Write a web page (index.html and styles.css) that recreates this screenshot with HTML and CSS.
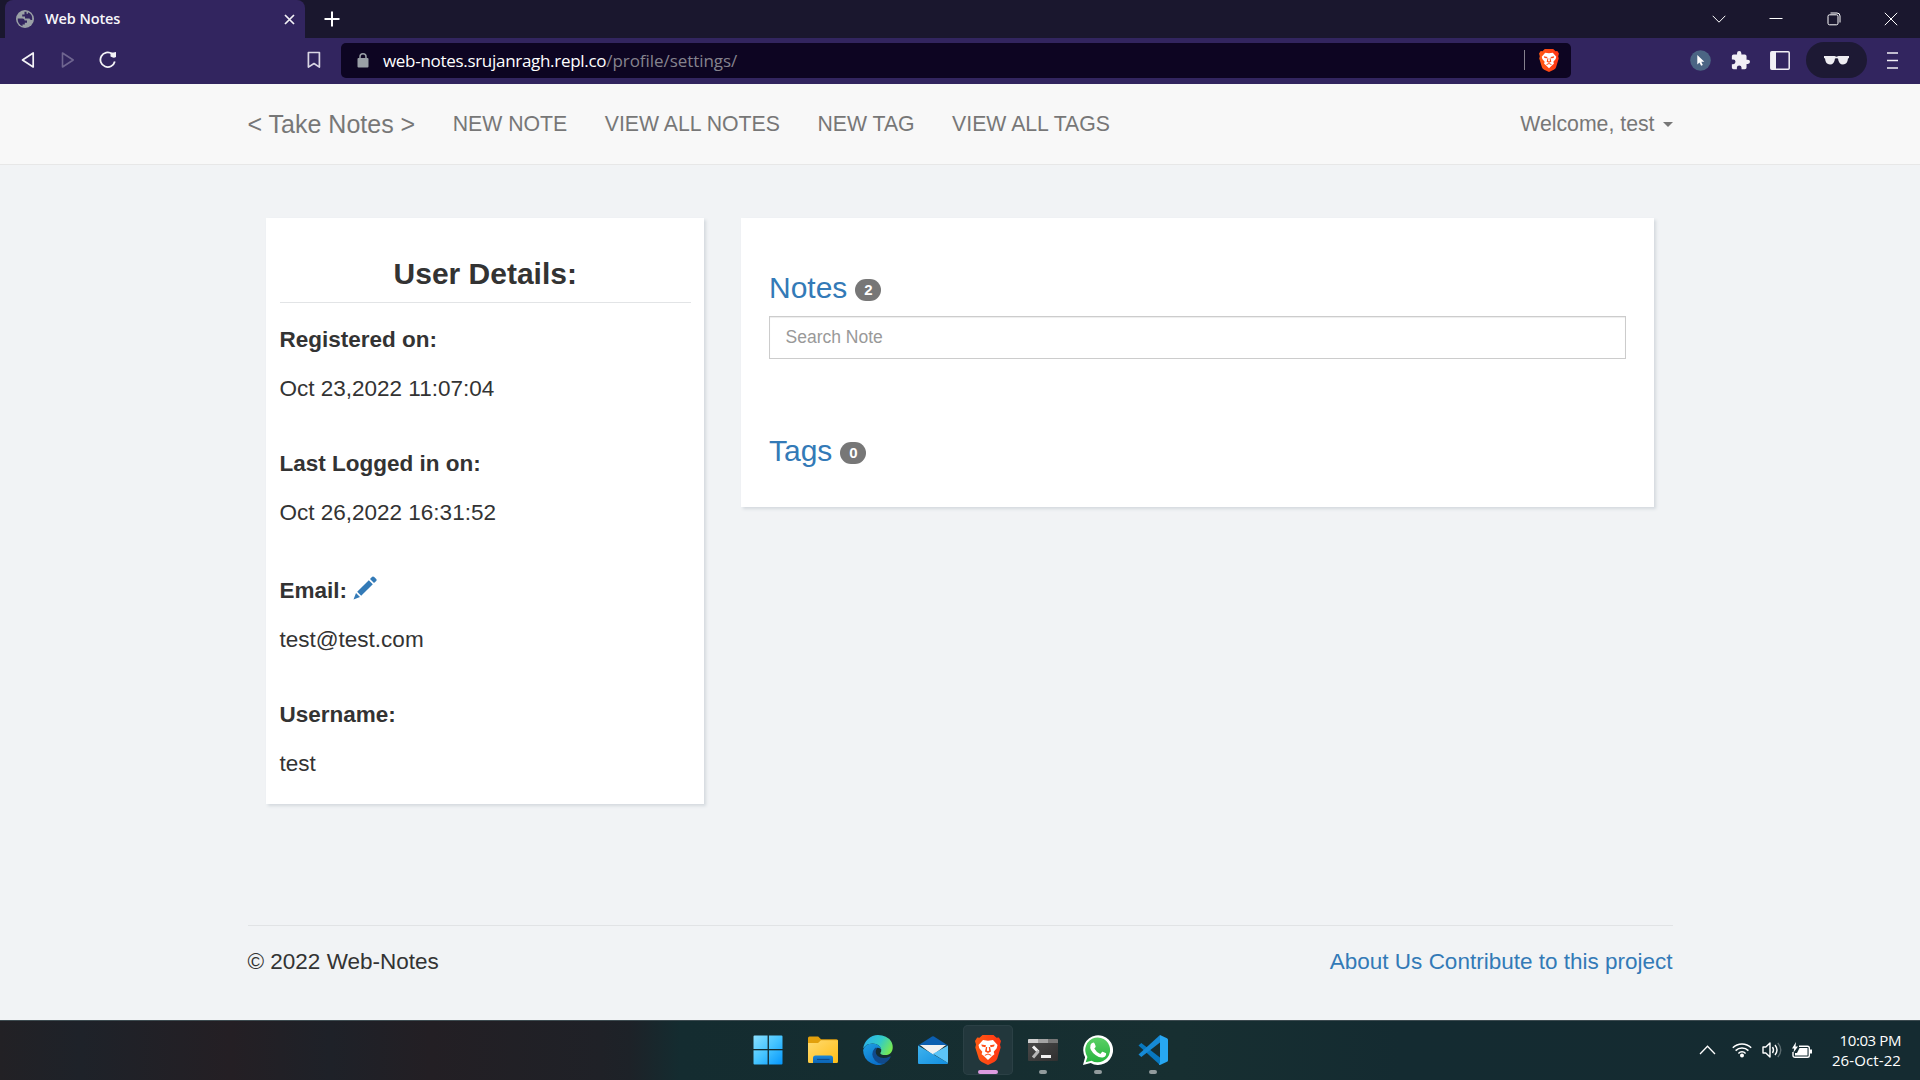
FILE: index.html
```html
<!DOCTYPE html>
<html lang="en">
<head>
<meta charset="utf-8">
<title>Web Notes</title>
<link rel="stylesheet" href="styles.css">
</head>
<body>
<div class="screen">
  <header class="tabstrip">
    <div class="tab">
      <svg class="tab-globe" width="18" height="18" viewBox="0 0 18 18"><circle cx="9" cy="9" r="9" fill="#9aa0a6"/><path d="M1.700 8.500h4.800q2 0 2.200 2H11v2.200H8.800v1.800H6.500v1.700A7.300 7.300 0 0 1 1.700 9zM8.500 1.800v2.700H6.200v2H9v2h4.500q1 2 2.700 1.500A7.300 7.300 0 0 0 12 2.300v1.500h-1.500v-2z" fill="#32255f"/></svg>
      <span class="tab-title">Web Notes</span>
      <svg class="tab-close" width="11" height="11" viewBox="0 0 11 11"><path d="M1 1l9 9M10 1l-9 9" stroke="#f3f2f6" stroke-width="1.700"/></svg>
    </div>
    <svg class="new-tab" width="16" height="16" viewBox="0 0 16 16"><path d="M8 .5v15M.5 8h15" stroke="#fff" stroke-width="2"/></svg>
    <div class="window-controls">
      <svg width="14" height="14" viewBox="0 0 14 14"><path d="M.7 3.800 7 10.200l6.300-6.400"/></svg>
      <svg width="14" height="14" viewBox="0 0 14 14"><path d="M.5 6.500h13"/></svg>
      <svg width="14" height="14" viewBox="0 0 14 14"><rect x="1" y="2.800" width="10" height="10" rx="1.500"/><path d="M3.500 1h6.500q3 0 3 3v6.500"/></svg>
      <svg width="14" height="14" viewBox="0 0 14 14"><path d="M.8.8l12.400 12.400M13.200.8.8 13.200"/></svg>
    </div>
  </header>
  <div class="toolbar">
    <svg class="nav-back" width="14" height="18" viewBox="0 0 14 18"><path d="M12.200 2v14L1.500 9z" fill="none" stroke="#f4f3f7" stroke-width="1.700" stroke-linejoin="round"/></svg>
    <svg class="nav-forward" width="14" height="18" viewBox="0 0 14 18"><path d="M1.500 2v14L12.200 9z" fill="none" stroke="#6f6590" stroke-width="1.600" stroke-linejoin="round"/></svg>
    <svg class="nav-reload" width="18" height="18" viewBox="0 0 18 18"><path d="M13 2.800A7.300 7.300 0 1 0 15.800 10.500" fill="none" stroke="#f4f3f7" stroke-width="1.800"/><path d="M11.500 1.800q3.500-.3 5.500-.8V6q-2.500 1.500-5.500-.5z" fill="#f4f3f7"/></svg>
    <svg class="bookmark" width="14" height="18" viewBox="0 0 14 18"><path d="M1.400 1.500h11v14.600L7 12.500l-5.600 3.600z" fill="none" stroke="#d9d6e4" stroke-width="1.700" stroke-linejoin="round"/></svg>
    <div class="address">
      <svg class="lock" width="12" height="15" viewBox="0 0 12 15"><rect x=".5" y="5" width="11" height="9.500" rx="1" fill="#9aa0a6"/><path d="M3 6V3.800a3 3 0 0 1 6 0V6" fill="none" stroke="#9aa0a6" stroke-width="1.500"/></svg>
      <span class="url">web-notes.srujanragh.repl.co<span class="url-path">/profile/settings/</span></span>
      <span class="address-line"></span>
      <svg class="shield" width="20" height="23" viewBox="0 0 26 30"><use href="#lion"/></svg>
    </div>
    <svg class="cursor-ext" width="21" height="21" viewBox="0 0 21 21"><circle cx="10.500" cy="10.500" r="10.300" fill="#4b6584"/><path d="M7.300 5v9.500l2.200-2 1.600 3.200 1.700-.8-1.500-3.200h3z" fill="#fff"/></svg>
    <svg class="puzzle" width="19" height="19" viewBox="1 1 22 22"><path fill="#f1eff5" d="M20.500 11H19V7a2 2 0 0 0-2-2h-4V3.500a2.500 2.500 0 0 0-5 0V5H4a2 2 0 0 0-2 2v3.800h1.500a2.700 2.700 0 0 1 0 5.400H2V20a2 2 0 0 0 2 2h3.800v-1.500a2.700 2.700 0 0 1 5.400 0V22H17a2 2 0 0 0 2-2v-4h1.500a2.500 2.500 0 0 0 0-5z"/></svg>
    <svg class="side-panel" width="20" height="19" viewBox="0 0 20 19"><rect x=".8" y=".8" width="18.400" height="17.400" rx="1" fill="none" stroke="#f1eff5" stroke-width="1.500"/><path d="M1 1h5v17H1z" fill="#f1eff5"/></svg>
    <div class="private">
      <svg width="25" height="9" viewBox="0 0 25 9"><path d="M0 0h10.500l2 .8 2-.8H25v2l-1 .6Q23.500 8.500 19 8.500q-4.300 0-5-6-1.500-.7-3 0-.7 6-5 6Q1.500 8.500 1 2.600L0 2z" fill="#eeedf2"/></svg>
    </div>
    <svg class="menu" width="11" height="17" viewBox="0 0 11 17"><path d="M0 1h11M0 8.500h11M0 16h11" stroke="#f1eff5" stroke-width="1.600"/></svg>
  </div>

  <div class="page">
    <nav class="navbar">
      <div class="container navbar-inner">
        <a class="brand">&lt; Take Notes &gt;</a>
        <a class="nav-link">NEW NOTE</a>
        <a class="nav-link">VIEW ALL NOTES</a>
        <a class="nav-link">NEW TAG</a>
        <a class="nav-link">VIEW ALL TAGS</a>
        <a class="nav-link welcome">Welcome, test <span class="caret"></span></a>
      </div>
    </nav>
    <main class="container columns">
      <section class="card details">
        <h3 class="details-title">User Details:</h3>
        <p class="label">Registered on:</p>
        <p class="value">Oct 23,2022 11:07:04</p>
        <p class="label">Last Logged in on:</p>
        <p class="value">Oct 26,2022 16:31:52</p>
        <p class="label label-email">Email: <svg width="24" height="24" viewBox="0 0 24 24"><path fill="#337ab7" d="M.5 23.500 3 17l4 4zM4.200 15.800 15.800 4.200l4 4L8.200 19.800zM17 3l2.200-2.200q1-.8 2 .2l2 2q.9 1 0 2L21 7z"/></svg></p>
        <p class="value">test@test.com</p>
        <p class="label">Username:</p>
        <p class="value">test</p>
      </section>
      <section class="card lists">
        <h3 class="list-title"><a>Notes</a><span class="badge">2</span></h3>
        <input class="search" type="text" placeholder="Search Note">
        <h3 class="list-title tags-title"><a>Tags</a><span class="badge">0</span></h3>
      </section>
    </main>
    <footer class="container footer">
      <span>© 2022 Web-Notes</span>
      <span class="footer-links"><a>About Us</a> <a>Contribute to this project</a></span>
    </footer>
  </div>

  <div class="taskbar">
    <div class="apps">
      <div class="app"><svg width="30" height="30" viewBox="0 0 30 30"><defs><linearGradient id="win" x1="0" y1="0" x2="1" y2="1"><stop offset="0" stop-color="#8ae0ff"/><stop offset=".5" stop-color="#45c4ff"/><stop offset="1" stop-color="#0596fb"/></linearGradient></defs><path fill="url(#win)" d="M1.500.5H15V14H.5V1.500q0-1 1-1zM15.800.5h12.700q1 0 1 1V14H15.800zM.5 15.200H15v14.300H1.500q-1 0-1-1zM15.800 15.200h13.700v13.300q0 1-1 1H15.800z"/><path d="M15.100 0v30M0 14.600h30" stroke="#142c30" stroke-width="1"/></svg></div>
      <div class="app"><svg width="30" height="30" viewBox="0 0 30 30"><defs><linearGradient id="folder" x1="0" y1="0" x2="1" y2="1"><stop offset="0" stop-color="#ffdb70"/><stop offset="1" stop-color="#ffbd16"/></linearGradient><linearGradient id="tray" x1="0" y1="0" x2="0" y2="1"><stop offset="0" stop-color="#1a86d8"/><stop offset="1" stop-color="#0b63b4"/></linearGradient></defs><path d="M0 3q0-1.500 1.500-1.500h8.700L13 4.300h15.500q1.500 0 1.500 2V12H0z" fill="#e2a00c"/><path d="M0 8h10l3-2.800h17v21.300q0 1.500-1.500 1.500h-27Q0 28 0 26.500z" fill="url(#folder)"/><path d="M5 28v-5q0-2.500 2.500-2.500h15Q25 20.500 25 23v5z" fill="url(#tray)"/><path d="M9 24.500h12.500" stroke="#0b4a8b" stroke-width="1.200"/></svg></div>
      <div class="app"><svg width="30" height="30" viewBox="0 0 30 30"><defs><linearGradient id="edgetop" x1="0" y1=".2" x2="1" y2=".6"><stop offset="0" stop-color="#2ab0ee"/><stop offset=".55" stop-color="#33cbc7"/><stop offset="1" stop-color="#77ea51"/></linearGradient><linearGradient id="edgeside" x1="0" y1="0" x2=".8" y2="1"><stop offset="0" stop-color="#1fa2e3"/><stop offset="1" stop-color="#0767c5"/></linearGradient></defs><path d="M.2 13.500A15 15 0 0 1 15 0q9 0 13.200 6.500C31 11 30.500 20 22 20q-4.500 0-4.700-2 1-1 1-3.300Q17 9 9.500 8.500 3 8.700.2 13.500z" fill="url(#edgetop)"/><path d="M.1 15Q2 8.800 9.500 8.500q7.500.5 8.800 6Q16.500 12 13 13c-3 2-3.500 9 1 13 3 2.600 7 2.800 10 1A15 15 0 0 1 .1 15z" fill="url(#edgeside)"/><path d="M12.200 12.800Q6.500 19 12 25.500q7 7 14-.8 3-4.200.7-3.200-7.200 3.300-12-.5-3.700-3.500-.5-8z" fill="#114a8b"/></svg></div>
      <div class="app"><svg width="30" height="30" viewBox="0 0 30 30"><defs><linearGradient id="mail" x1="0" y1="0" x2="1" y2="1"><stop offset="0" stop-color="#3fb3ee"/><stop offset="1" stop-color="#138fe0"/></linearGradient></defs><path d="M0 10.500 14 1.500q1-.6 2 0l14 9z" fill="#0b5eb0"/><path d="M2 10h26L15 20z" fill="#f0f0f1"/><path d="M0 10.500 30 28q0 .9-1 .9H1q-1 0-1-1z" fill="url(#mail)"/><path d="M30 10.500V28L15 18.800z" fill="#5cc3f6"/></svg></div>
      <div class="app app-active"><svg width="26" height="30" viewBox="0 0 26 30"><defs><linearGradient id="brave" x1="0" y1="0" x2="1" y2="0"><stop offset="0" stop-color="#ff5b13"/><stop offset="1" stop-color="#ff3414"/></linearGradient></defs><g id="lion"><path d="M7.500 0h11l3 2.800 2.300-.3L26 6l-1 3.500.7 3-3.500 11.300q-.8 2-3 3.200L13 30l-6.200-3q-2.200-1.200-3-3.200L.3 12.500l.7-3L0 6l2.200-3.500 2.300.3z" fill="url(#brave)"/><path d="M8 5l5 .7L18 5l4.500 5-.8 3.200-3 3.500.7 2.600-2 1.500L13 25l-4.400-4.200-2-1.500.7-2.600-3-3.500L3.500 10z" fill="#fff"/><path d="M6.300 9.500 11 10.300l-.6 1.900-3.400-.6zM19.700 9.500 15 10.300l.6 1.900 3.400-.6zM11 12h1.200l-.4 3.600 1.200.7 1.200-.7-.4-3.600H15l1 4.500-3 1.500-3-1.500zM9.500 20l3.500-1.600 3.500 1.600-.6.800-2.900-1.200-2.900 1.200z" fill="#ff4b14"/></g></svg><span class="indicator"></span></div>
      <div class="app"><svg width="30" height="30" viewBox="0 0 30 30"><defs><linearGradient id="term" x1="0" y1="0" x2="1" y2="1"><stop offset="0" stop-color="#4b4b4b"/><stop offset="1" stop-color="#303030"/></linearGradient></defs><rect y="4" width="30" height="22" rx="1" fill="url(#term)"/><path d="M0 5q0-1 1-1h9v4H0z" fill="#d0d0d0"/><path d="M10 4h10v4H10z" fill="#a3a3a3"/><path d="M20 4h9q1 0 1 1v3H20z" fill="#767676"/><path d="M5 11.500 10.500 17" stroke="#f0f0f0" stroke-width="3"/><path d="M10.500 16 5 22.500" stroke="#b7b7b7" stroke-width="3"/><path d="M13 20h10v3H13z" fill="#f0f0f0"/></svg><span class="indicator"></span></div>
      <div class="app"><svg width="30" height="30" viewBox="0 0 30 30"><defs><linearGradient id="wa" x1="0" y1="0" x2="0" y2="1"><stop offset="0" stop-color="#5bd066"/><stop offset="1" stop-color="#27b43e"/></linearGradient></defs><path d="M0 30l2.100-7.700A14.900 14.900 0 1 1 7.700 28z" fill="#fff"/><path d="M2.700 27.300l1.700-5.400A12.400 12.400 0 1 1 8.500 25.700z" fill="url(#wa)"/><path d="M9.200 8q1.500-1.300 2.300.2l1.200 3q.2.700-1.400 2.300 2.200 4 6 5.500l1.900-2.200q.7-.4 3.900 1.500.3 3-2.600 4-3.500 1-8-2.300-6.500-5-5-10 .5-1.300 1.700-2z" fill="#fff"/></svg><span class="indicator"></span></div>
      <div class="app"><svg width="30" height="30" viewBox="0 0 30 30"><path d="M3.300 8 22 22.500V30L.5 10.500z" fill="#0878bf"/><path d="M.5 19.500 3.300 22 22 7.500V0z" fill="#168ad6"/><path d="M22 0l7 3.200q1 .5 1 1.600v20.400q0 1.100-1 1.600L22 30q-.5 0-1-.5l1-2z" fill="#27a7f2"/></svg><span class="indicator"></span></div>
    </div>
    <div class="tray">
      <svg class="tray-chevron" width="17" height="10" viewBox="0 0 17 10"><path d="M1 9 8.500 1.200 16 9" fill="none" stroke="#fff" stroke-width="1.300"/></svg>
      <svg class="wifi" width="20" height="16" viewBox="0 0 20 16"><g fill="none" stroke="#fff" stroke-width="1.500"><path d="M.8 5.700a13 13 0 0 1 18.400 0M3.600 8.600a9 9 0 0 1 12.800 0M6.400 11.400a5 5 0 0 1 7.200 0"/></g><circle cx="10" cy="13.500" r="2" fill="#fff"/></svg>
      <svg class="volume" width="20" height="18" viewBox="0 0 20 18"><g fill="none" stroke="#fff" stroke-width="1.400" stroke-linejoin="round"><path d="M1 6h2.800L8 2v14l-4.200-4H1zM10.500 6q2 3 0 6M13 4q4 5 0 10"/><path d="M15.800 2q6 7 0 14" opacity=".3"/></g></svg>
      <svg class="battery" width="20" height="17" viewBox="0 0 20 17"><path d="M7 4.200h8.500q1.800 0 1.800 1.800v7.500q0 1.800-1.800 1.800H3Q1 15.300 1 13.500V10" fill="none" stroke="#fff" stroke-width="1.400"/><path d="M7.500 6h8v7.500H3V11h2zM18 7.500h2v4h-2zM4 0 0 6.500h2.200L1.500 10.500 6 4.500H3.500z" fill="#fff"/></svg>
      <div class="clock"><span>10:03 PM</span><span class="date">26-Oct-22</span></div>
    </div>
  </div>
</div>
</body>
</html>
```
FILE: styles.css
```css
* { box-sizing: border-box; }
body { margin: 0; overflow: hidden; }
svg { display: block; flex: none; }
h3, p { margin: 0; }

.screen {
  width: 1920px;
  height: 1080px;
  display: flex;
  flex-direction: column;
  font-family: "Liberation Sans", Arial, sans-serif;
}

/* Browser window */
.tabstrip {
  height: 38px;
  flex: none;
  display: flex;
  align-items: center;
  background: #1a172e;
  padding-left: 5px;
}
.tab {
  width: 300px;
  height: 38px;
  display: flex;
  align-items: center;
  padding: 0 10px 0 11px;
  border-radius: 8px 8px 0 0;
  background: #32255f;
}
.tab-title {
  margin-left: 11px;
  font: 600 14.500px/20px "Open Sans", "Noto Sans", sans-serif;
  letter-spacing: -0.1px;
  color: #f7f6fa;
}
.tab-close { margin-left: auto; }
.new-tab { margin-left: 19px; }
.window-controls {
  margin: 0 22px 0 auto;
  display: flex;
  gap: 43.500px;
}
.window-controls svg { fill: none; stroke: #fff; stroke-width: 1; }

.toolbar {
  height: 46px;
  flex: none;
  display: flex;
  align-items: center;
  padding-bottom: 2px;
  padding-left: 21px;
  background: #32255f;
}
.nav-forward { margin-left: 26px; }
.nav-reload { margin-left: 24px; }
.bookmark { margin-left: 190px; }
.address {
  width: 1230px;
  height: 35px;
  margin-left: 20px;
  display: flex;
  align-items: center;
  padding: 0 12px 0 16px;
  border-radius: 5px;
  background: #0d0522;
}
.url {
  margin: 2px 0 0 14px;
  font: 17px/24px "Open Sans", "Noto Sans", sans-serif;
  letter-spacing: -0.3px;
  color: #fff;
}
.url-path { letter-spacing: -0.05px; color: #85838e; }
.address-line { width: 1px; height: 20px; margin-left: auto; background: #85818e; }
.shield { margin-left: 14px; }
.cursor-ext { margin-left: 119px; }
.puzzle { margin-left: 20px; }
.side-panel { margin-left: 20px; }
.private {
  width: 61px;
  height: 36px;
  margin-left: 16px;
  display: flex;
  align-items: center;
  justify-content: center;
  border-radius: 18px;
  background: #1d1934;
}
.menu { margin-left: 20px; }

/* Web page */
.page {
  height: 936px;
  flex: none;
  background: #f1f3f5;
  color: #333;
  font-size: 22.500px;
}
.container { width: 1425px; margin: 0 auto; }
.page a { color: #337ab7; }
.navbar { height: 81px; background: #f8f8f8; border-bottom: 1px solid #e7e7e7; }
.navbar-inner { height: 80px; display: flex; align-items: center; }
.navbar .brand { font-size: 25px; color: #777; }
.navbar .nav-link { margin-left: 37.500px; font-size: 21.250px; color: #777; }
.navbar .welcome { margin-left: auto; display: flex; align-items: center; }
.caret {
  margin-left: 8px;
  border: 5px solid transparent;
  border-top-color: #777;
  border-bottom: 0;
}
.columns {
  height: 760px;
  display: flex;
  align-items: flex-start;
  gap: 37px;
  padding: 53px 18px 0 18.500px;
}
.card { background: #fff; box-shadow: 2px 2px 3px #d4d9de; }
.details { width: 438px; height: 586px; padding: 36px 13px 0 13.500px; }
.details-title {
  height: 49px;
  text-align: center;
  font-size: 30px;
  line-height: 40px;
  border-bottom: 1px solid #e2e4e6;
}
.label { margin-top: 21px; font-weight: 700; line-height: 32px; }
.value { margin-top: 17px; line-height: 32px; }
.value + .label { margin-top: 43px; }
.value + .label-email { display: flex; align-items: center; gap: 6px; height: 32px; margin-top: 46px; }
.label-email svg { margin-top: -6px; }
.lists { width: 913px; height: 289px; padding: 51px 28px 0; }
.list-title {
  height: 38px;
  display: flex;
  align-items: center;
  font-size: 30px;
  font-weight: 400;
}
.badge {
  min-width: 26px;
  height: 22px;
  margin: 4px 0 0 8px;
  border-radius: 12.500px;
  background: #777;
  color: #fff;
  font-size: 15px;
  font-weight: 700;
  line-height: 22px;
  text-align: center;
}
.search {
  display: block;
  width: 857px;
  height: 43px;
  margin-top: 9px;
  padding: 0 15px 0 15.500px;
  border: 1px solid #ccc;
  border-radius: 0;
  box-shadow: inset 0 1px 1px rgba(0, 0, 0, 0.075);
  font: 17.500px "Liberation Sans", Arial, sans-serif;
}
.search::placeholder { color: #999; }
.tags-title { margin-top: 73px; }
.footer {
  display: flex;
  justify-content: space-between;
  padding-top: 20px;
  border-top: 1px solid #e1e3e5;
  line-height: 32px;
}

/* Taskbar */
.taskbar {
  flex: 1;
  display: flex;
  align-items: center;
  padding-bottom: 1px;
  border-top: 1px solid #3d4b50;
  background: linear-gradient(90deg, #222125 0, #1e2229 80px, #241f24 230px, #1e2128 330px, #231f24 430px, #1f2127 600px, #1d2228 630px, #142c30 680px, #172f31 1180px, #142b31 1400px, #152b31 1920px);
}
.apps { margin-left: 743px; display: flex; gap: 5px; }
.app {
  position: relative;
  width: 50px;
  height: 50px;
  display: flex;
  align-items: center;
  justify-content: center;
  border-radius: 5px;
}
.app-active { background: #22373c; box-shadow: inset 0 0 0 1px #2b4045; }
.indicator {
  position: absolute;
  left: 21px;
  bottom: 1px;
  width: 8px;
  height: 4px;
  border-radius: 2px;
  background: #929b9d;
}
.app-active .indicator { left: 15px; width: 20px; background: #dc9be0; }
.tray { margin: 0 19px 0 auto; display: flex; align-items: center; }
.wifi { margin-left: 16px; }
.volume { margin-left: 10px; }
.battery { margin-left: 10px; }
.clock {
  width: 78px;
  margin-left: 11px;
  display: flex;
  flex-direction: column;
  align-items: flex-end;
  font: 15px/20px "Open Sans", "Noto Sans", sans-serif;
  letter-spacing: -0.4px;
  color: #fff;
  white-space: nowrap;
}
.date { letter-spacing: 0.1px; }
```
